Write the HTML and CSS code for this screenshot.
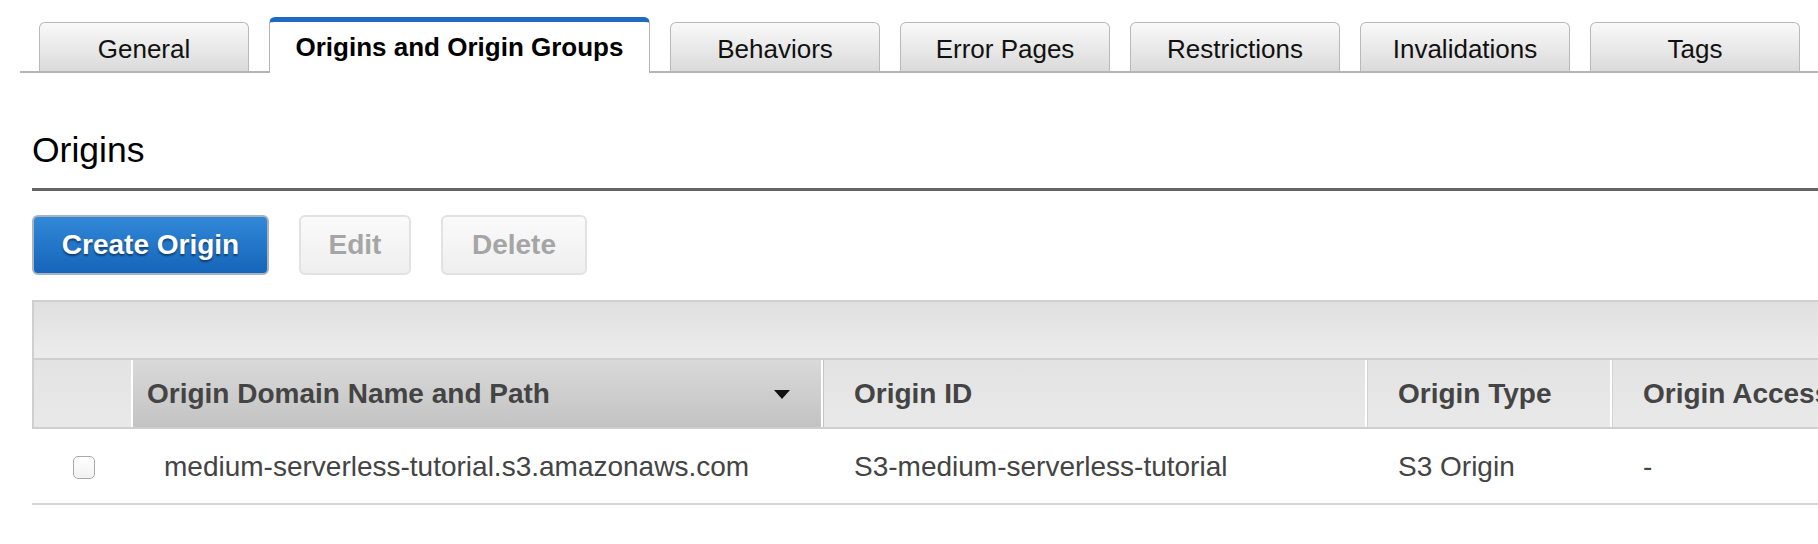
FILE: index.html
```html
<!DOCTYPE html>
<html>
<head>
<meta charset="utf-8">
<title>Origins</title>
<link rel="stylesheet" href="styles.css">
</head>
<body>
<div class="page">
  <nav class="tabs">
    <div class="tab">General</div>
    <div class="tab active">Origins and Origin Groups</div>
    <div class="tab">Behaviors</div>
    <div class="tab">Error Pages</div>
    <div class="tab">Restrictions</div>
    <div class="tab">Invalidations</div>
    <div class="tab">Tags</div>
  </nav>
  <main class="content">
    <h2 class="section-title">Origins</h2>
    <div class="actions">
      <button class="btn btn-primary">Create Origin</button>
      <button class="btn btn-disabled btn-edit">Edit</button>
      <button class="btn btn-disabled btn-delete">Delete</button>
    </div>
    <div class="grid">
      <div class="grid-toolbar"></div>
      <div class="grid-row grid-head">
        <div class="cell cell-check"></div>
        <div class="cell cell-domain sorted"><span>Origin Domain Name and Path</span><span class="sort-arrow"></span></div>
        <div class="cell cell-id">Origin ID</div>
        <div class="cell cell-type">Origin Type</div>
        <div class="cell cell-access">Origin Access Identity</div>
      </div>
      <div class="grid-row grid-data">
        <div class="cell cell-check"><span class="checkbox"></span></div>
        <div class="cell cell-domain">medium-serverless-tutorial.s3.amazonaws.com</div>
        <div class="cell cell-id">S3-medium-serverless-tutorial</div>
        <div class="cell cell-type">S3 Origin</div>
        <div class="cell cell-access">-</div>
      </div>
    </div>
  </main>
</div>
</body>
</html>
```
FILE: styles.css
```css
html, body {
  margin: 0;
  padding: 0;
  background: #fff;
  overflow: hidden;
}
body {
  font-family: "Liberation Sans", Arial, Helvetica, sans-serif;
  color: #222;
}
.page {
  width: 2200px;
}

/* Tabs */
.tabs {
  display: flex;
  align-items: flex-end;
  gap: 20px;
  margin: 17px 0 0 20px;
  padding-left: 19px;
  border-bottom: 2px solid #b5b5b5;
  height: 54px;
}
.tab {
  box-sizing: border-box;
  width: 210px;
  height: 49px;
  border: 1px solid #b9b9b9;
  border-bottom: none;
  border-radius: 6px 6px 0 0;
  background: linear-gradient(#f9f9f9, #dadada);
  display: flex;
  align-items: center;
  justify-content: center;
  padding-top: 4px;
  font-size: 26px;
  color: #111;
  white-space: nowrap;
}
.tab.active {
  width: 381px;
  height: 56px;
  margin-bottom: -2px;
  background: #fff;
  border-top: 5px solid #1f69c4;
  border-color: #b5b5b5;
  border-top-color: #1f69c4;
  font-weight: bold;
  color: #000;
  padding-top: 0;
}

/* Content */
.content {
  padding-left: 32px;
}
.section-title {
  margin: 57px 0 0 0;
  font-size: 35.5px;
  line-height: 41px;
  font-weight: normal;
  color: #000;
  padding-bottom: 17px;
  border-bottom: 3px solid #666;
}
.actions {
  display: flex;
  gap: 30px;
  margin-top: 24px;
}
.btn {
  box-sizing: border-box;
  height: 60px;
  padding: 0;
  border-radius: 6px;
  font-family: "Liberation Sans", Arial, Helvetica, sans-serif;
  font-size: 28px;
  font-weight: bold;
  cursor: default;
}
.btn-primary {
  color: #fff;
  border: 2px solid #a9b3bf;
  background: linear-gradient(#3288d8, #1565ba);
  text-shadow: 0 2px 2px rgba(0, 0, 0, 0.45);
  width: 237px;
}
.btn-disabled {
  color: #a5a5a5;
  border: 2px solid #e2e2e2;
  background: linear-gradient(#fafafa, #efefef);
}
.btn-edit { width: 112px; }
.btn-delete { width: 146px; }

/* Grid */
.grid {
  margin-top: 25px;
  border-top: 2px solid #cfcfcf;
  border-left: 2px solid #cfcfcf;
}
.grid-toolbar {
  height: 56px;
  background: linear-gradient(#e0e0e0, #ececec);
  border-bottom: 2px solid #cfcfcf;
}
.grid-row {
  display: grid;
  grid-template-columns: 97px 690px 544px 245px 600px;
}
.grid-head {
  height: 67px;
  border-bottom: 2px solid #cfcfcf;
  font-size: 28px;
  font-weight: bold;
  color: #444;
}
.grid-head .cell {
  background: linear-gradient(#e3e3e3, #e9e9e9);
  display: flex;
  align-items: center;
  padding-left: 31px;
  box-shadow: inset 1px 0 0 #d2d2d2;
}
.grid-head .cell + .cell {
  border-left: 2px solid #fff;
}
.grid-head .cell-check {
  padding-left: 0;
  box-shadow: none;
}
.grid-head .cell-domain.sorted {
  background: linear-gradient(#d9d9d9, #c3c3c3);
  padding-left: 14px;
  padding-right: 31px;
  justify-content: space-between;
  box-shadow: none;
}
.grid-head .cell-id {
  box-shadow: inset 1px 0 0 #c4c4c4;
}
.sort-arrow {
  width: 0;
  height: 0;
  border-left: 8px solid transparent;
  border-right: 8px solid transparent;
  border-top: 9px solid #111;
  margin-top: 2px;
}
.cell {
  box-sizing: border-box;
  white-space: nowrap;
  overflow: hidden;
}
.grid-data {
  height: 74px;
  border-bottom: 2px solid #d5d5d5;
  font-size: 28px;
  color: #444;
  margin-left: -2px;
  padding-left: 2px;
  background: #fff;
}
.grid-data .cell {
  display: flex;
  align-items: center;
  padding-left: 33px;
  padding-top: 2px;
}
.grid-data .cell-check {
  padding-left: 39px;
}
.checkbox {
  box-sizing: border-box;
  width: 22px;
  height: 23px;
  border: 1px solid #a9a9a9;
  border-radius: 5px;
  background: linear-gradient(#ffffff, #f1f1f1);
}
```
